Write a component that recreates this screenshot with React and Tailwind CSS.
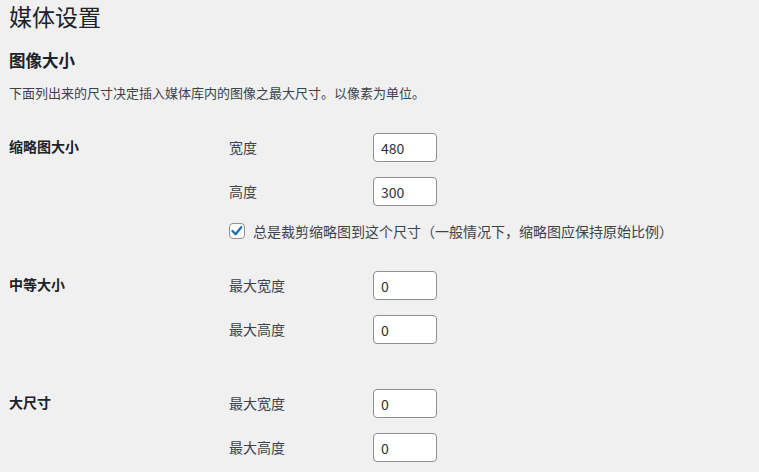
import React from 'react';

const font = { fontFamily: '"Noto Sans CJK SC", "Noto Sans", sans-serif' };

function NumberField({ label, value }) {
  return (
    <div className="flex items-center h-[29px]">
      <span className="w-[144px] text-[14px] text-[#3c434a] leading-5 -mt-[2px]">{label}</span>
      <input
        type="text"
        defaultValue={value}
        className="w-[64px] h-[29px] px-[7px] bg-white border border-[#8c8f94] rounded-[4px] text-[14px] text-[#2c3338] outline-none"
      />
    </div>
  );
}

function SizeGroup({ title, children, className = '' }) {
  return (
    <div className={`flex ${className}`}>
      <div className="w-[220px] h-[29px] flex items-center text-[14px] font-bold text-[#1d2327] leading-5">
        <span className="-mt-[3px]">{title}</span>
      </div>
      <div className="flex flex-col">{children}</div>
    </div>
  );
}

export default function App() {
  return (
    <div className="min-h-screen bg-[#f0f0f1] pl-[9px] overflow-hidden" style={font}>
      <h1 className="mt-[2px] text-[23px] leading-[29px] font-normal text-[#1d2327]">媒体设置</h1>
      <h2 className="mt-[17px] text-[16.5px] leading-6 font-bold text-[#1d2327]">图像大小</h2>
      <p className="mt-[11px] text-[13px] leading-5 text-[#3c434a]">
        下面列出来的尺寸决定插入媒体库内的图像之最大尺寸。以像素为单位。
      </p>

      <SizeGroup title="缩略图大小" className="mt-[30px]">
        <NumberField label="宽度" value="480" />
        <div className="mt-[15px]">
          <NumberField label="高度" value="300" />
        </div>
        <label className="mt-[17px] flex items-center gap-2 h-4 cursor-pointer">
          <span className="w-4 h-4 bg-white border border-[#8c8f94] rounded-[4px] flex items-center justify-center">
            <svg viewBox="0 0 20 20" className="w-[16px] h-[16px]">
              <path d="M3.5 10 L8 14.5 L16 4.5" fill="none" stroke="#2271b1" strokeWidth="3.4" strokeLinecap="round" strokeLinejoin="round" />
            </svg>
          </span>
          <span className="text-[14px] text-[#3c434a] leading-5 -mt-[1px]">
            总是裁剪缩略图到这个尺寸（一般情况下，缩略图应保持原始比例）
          </span>
        </label>
      </SizeGroup>

      <SizeGroup title="中等大小" className="mt-[32px]">
        <NumberField label="最大宽度" value="0" />
        <div className="mt-[15px]">
          <NumberField label="最大高度" value="0" />
        </div>
      </SizeGroup>

      <SizeGroup title="大尺寸" className="mt-[45px]">
        <NumberField label="最大宽度" value="0" />
        <div className="mt-[15px]">
          <NumberField label="最大高度" value="0" />
        </div>
      </SizeGroup>
    </div>
  );
}
